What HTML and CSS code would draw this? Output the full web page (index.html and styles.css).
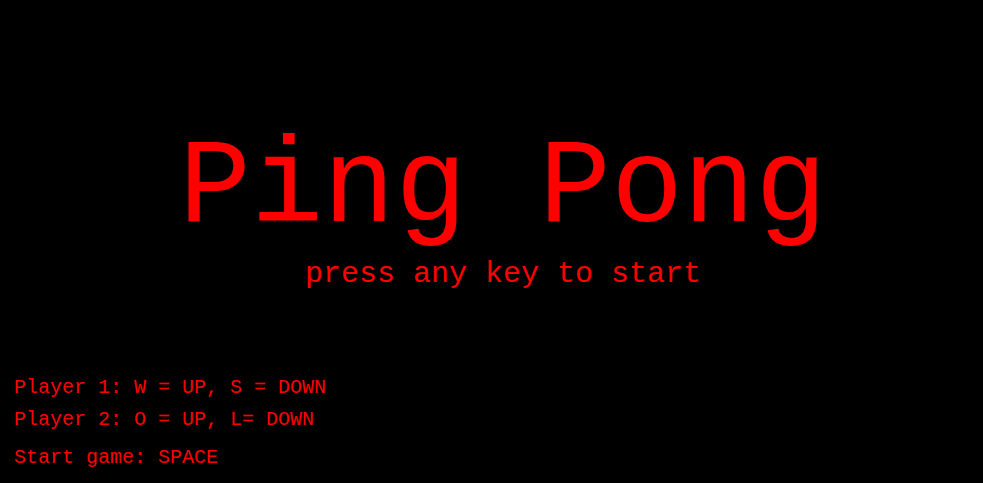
FILE: index.html
```html
<!DOCTYPE html>
<html lang="en">
<head>
<meta charset="utf-8">
<title>Ping Pong</title>
<link rel="stylesheet" href="styles.css">
</head>
<body>
<main class="screen">
  <header class="intro">
    <h1 class="title">Ping Pong</h1>
    <p class="prompt">press any key to start</p>
  </header>
  <section class="controls">
    <p class="control">Player 1: W = UP, S = DOWN</p>
    <p class="control">Player 2: O = UP, L= DOWN</p>
    <p class="control control-start">Start game: SPACE</p>
  </section>
</main>
</body>
</html>
```
FILE: styles.css
```css
html, body {
  margin: 0;
  padding: 0;
  background: #000;
}

.screen {
  width: 983px;
  height: 483px;
  display: flex;
  flex-direction: column;
  background: #000;
  color: #ff0000;
  font-family: "Liberation Mono", "Courier New", monospace;
  overflow: hidden;
}

.intro {
  display: flex;
  flex-direction: column;
  align-items: center;
  padding-left: 23px;
  margin-top: 121px;
}

.title {
  margin: 0;
  font-size: 120px;
  line-height: normal;
  font-weight: normal;
  white-space: pre;
}

.prompt {
  margin: 2px 0 0;
  font-size: 30px;
  line-height: 30px;
  white-space: pre;
}

.controls {
  display: flex;
  flex-direction: column;
  gap: 12px;
  margin-top: 89px;
  padding-left: 14px;
}

.control {
  margin: 0;
  font-size: 20px;
  line-height: 20px;
  white-space: pre;
}

.control-start {
  margin-top: 6px;
}
```
